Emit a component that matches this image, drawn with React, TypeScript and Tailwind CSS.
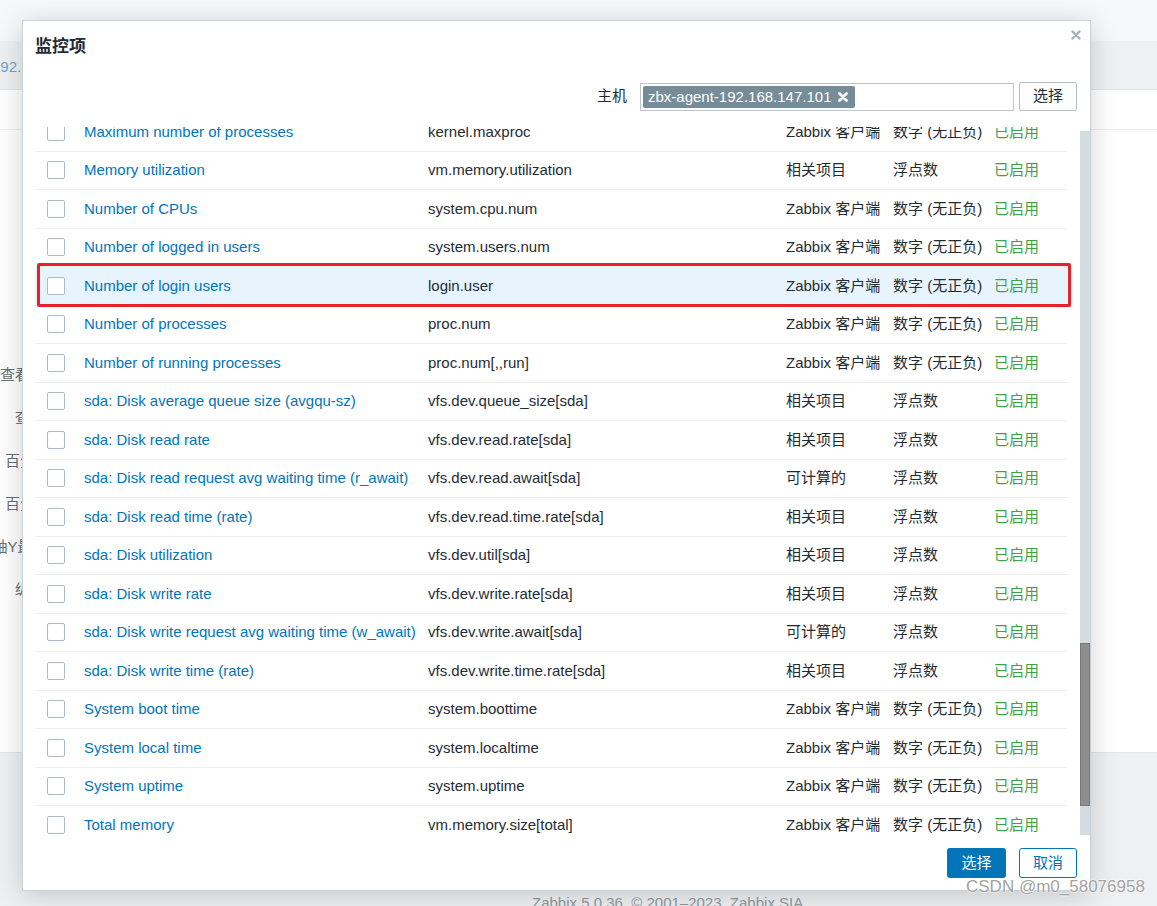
import React from "react";

type Row = { name: string; key: string; type: string; vt: string; hl?: boolean };

const Z = "Zabbix 客户端";
const N = "数字 (无正负)";
const R = "相关项目";
const F = "浮点数";
const C = "可计算的";

const rows: Row[] = [
  { name: "Maximum number of processes", key: "kernel.maxproc", type: Z, vt: N },
  { name: "Memory utilization", key: "vm.memory.utilization", type: R, vt: F },
  { name: "Number of CPUs", key: "system.cpu.num", type: Z, vt: N },
  { name: "Number of logged in users", key: "system.users.num", type: Z, vt: N },
  { name: "Number of login users", key: "login.user", type: Z, vt: N, hl: true },
  { name: "Number of processes", key: "proc.num", type: Z, vt: N },
  { name: "Number of running processes", key: "proc.num[,,run]", type: Z, vt: N },
  { name: "sda: Disk average queue size (avgqu-sz)", key: "vfs.dev.queue_size[sda]", type: R, vt: F },
  { name: "sda: Disk read rate", key: "vfs.dev.read.rate[sda]", type: R, vt: F },
  { name: "sda: Disk read request avg waiting time (r_await)", key: "vfs.dev.read.await[sda]", type: C, vt: F },
  { name: "sda: Disk read time (rate)", key: "vfs.dev.read.time.rate[sda]", type: R, vt: F },
  { name: "sda: Disk utilization", key: "vfs.dev.util[sda]", type: R, vt: F },
  { name: "sda: Disk write rate", key: "vfs.dev.write.rate[sda]", type: R, vt: F },
  { name: "sda: Disk write request avg waiting time (w_await)", key: "vfs.dev.write.await[sda]", type: C, vt: F },
  { name: "sda: Disk write time (rate)", key: "vfs.dev.write.time.rate[sda]", type: R, vt: F },
  { name: "System boot time", key: "system.boottime", type: Z, vt: N },
  { name: "System local time", key: "system.localtime", type: Z, vt: N },
  { name: "System uptime", key: "system.uptime", type: Z, vt: N },
  { name: "Total memory", key: "vm.memory.size[total]", type: Z, vt: N },
];

const labels = ["查看工作时间", "查看触发器", "百分比线(左)", "百分比线(右)", "纵轴Y最小值MIN", "纵轴最大值"];

function XIcon({ color, size, sw }: { color: string; size: number; sw: number }) {
  return (
    <svg width={size} height={size} viewBox="0 0 10 10">
      <path d="M1.5 1.5 L8.5 8.5 M8.5 1.5 L1.5 8.5" stroke={color} strokeWidth={sw} strokeLinecap="round" />
    </svg>
  );
}

export default function App() {
  return (
    <div className="relative w-[1157px] h-[906px] overflow-hidden bg-white font-['Liberation_Sans','Noto_Sans_CJK_SC',sans-serif] text-[15px] text-[#1f2c33]">
      {/* background page */}
      <div className="flex flex-col h-full">
        <div className="h-[41px] shrink-0 bg-[#f7f8f9]" />
        <div className="h-[49px] shrink-0 bg-[#eef0f2] border-b border-[#e2e6e9] flex items-center pt-[4px]">
          <span className="ml-[-8px] text-[#6aa6cf]">192.168.147.101</span>
        </div>
        <div className="h-[662px] shrink-0 bg-white flex flex-col">
          <div className="h-[40px] shrink-0 border-b border-[#ebeef0]" />
          <div className="mt-[224px] w-[90px] flex flex-col text-[#666f75]">
            {labels.map((l) => (
              <div key={l} className="h-[43px] flex items-center justify-end whitespace-nowrap">
                {l}
              </div>
            ))}
          </div>
        </div>
        <div className="flex-1 min-h-0 overflow-hidden bg-[#eef0f2] border-t border-[#e2e6e9]">
          <div className="ml-[532px] mt-[139px] text-[#8e9aa1] whitespace-nowrap">
            Zabbix 5.0.36. © 2001–2023, Zabbix SIA
          </div>
        </div>
      </div>

      {/* dialog */}
      <div className="absolute left-[22px] top-[20px] w-[1069px] h-[871px] bg-white border border-[#c9d2d7] shadow-[0_4px_26px_rgba(0,0,0,0.18)] flex flex-col">
        <div className="h-[36px] shrink-0 flex justify-between">
          <div className="pl-[12px] pt-[16px] leading-[20px] text-[17px] font-bold text-[#1f2c33]">监控项</div>
          <div className="pt-[9px] pr-[9px]">
            <XIcon color="#a6b0b6" size={10} sw={2.4} />
          </div>
        </div>

        <div className="mt-[25px] h-[29px] shrink-0 flex items-center justify-end pr-[13px]">
          <span className="mr-[13px]">主机</span>
          <div className="w-[374px] h-[28px] border border-[#bcc6cc] flex items-center pl-[2px] mt-[1px]">
            <div className="h-[22px] rounded-[2px] bg-[#768d99] text-white flex items-center pl-[5px] pr-[7px] gap-[7px]">
              <span>zbx-agent-192.168.147.101</span>
              <XIcon color="#ffffff" size={10} sw={2.8} />
            </div>
          </div>
          <button className="ml-[5px] w-[58px] h-[29px] border border-[#b3bec4] rounded-[2px] bg-white text-[#1f2c33]">选择</button>
        </div>

        <div className="mt-[16px] h-[708px] shrink-0 flex overflow-hidden pl-[12px]">
          <div className="flex-1 pr-[13px] overflow-hidden">
            <div className="-mt-[14px] flex flex-col">
              {rows.map((r) => (
                <div
                  key={r.name}
                  className={
                    "relative h-[38.5px] shrink-0 flex items-center border-b border-[#ebeef0] whitespace-nowrap " +
                    (r.hl ? "bg-[#e7f4fd]" : "")
                  }
                >
                  <div className="w-[49px] pl-[12px] flex items-center">
                    <div className="w-[18px] h-[18px] rounded-[2px] border border-[#acbbc2] bg-white" />
                  </div>
                  <div className="w-[344px] text-[#0275b8]">{r.name}</div>
                  <div className="w-[358px]">{r.key}</div>
                  <div className="w-[107px]">{r.type}</div>
                  <div className="w-[101px]">{r.vt}</div>
                  <div className="flex-1 text-[#3fa146]">已启用</div>
                  {r.hl && (
                    <div className="absolute left-[2px] right-[-4px] top-[-4px] bottom-[-2px] border-[3px] border-[#e8202c] rounded-[2px] pointer-events-none" />
                  )}
                </div>
              ))}
            </div>
          </div>
          <div className="w-[10px] mt-[4px] bg-[#d3dce1] flex flex-col">
            <div className="h-[512px] shrink-0" />
            <div className="h-[163px] shrink-0 bg-[#8e8e8e] border border-[#7a7a7a]" />
          </div>
        </div>

        <div className="h-[55px] shrink-0 flex items-start justify-end pt-[13px] pr-[13px] gap-[13px]">
          <button className="w-[59px] h-[30px] rounded-[3px] bg-[#0275b8] text-white">选择</button>
          <button className="w-[58px] h-[30px] rounded-[3px] border border-[#0275b8] bg-white text-[#0275b8]">取消</button>
        </div>
      </div>

      {/* watermark */}
      <div className="absolute left-[966px] top-[877px] text-[17px] leading-[20px] text-[#a3a3a3] whitespace-nowrap [text-shadow:0_0_2px_#ffffff,0_0_2px_#ffffff]">
        CSDN @m0_58076958
      </div>
    </div>
  );
}
